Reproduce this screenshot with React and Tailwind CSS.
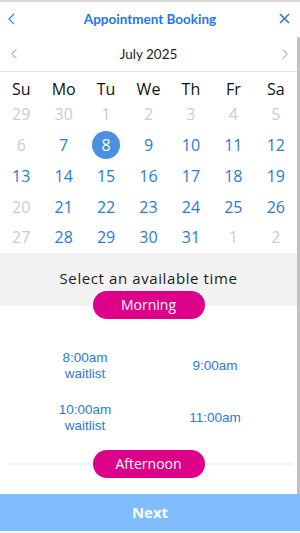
import React from 'react'

const weeks = [
  [[29, 0], [30, 0], [1, 0], [2, 0], [3, 0], [4, 0], [5, 0]],
  [[6, 0], [7, 1], [8, 2], [9, 1], [10, 1], [11, 1], [12, 1]],
  [[13, 1], [14, 1], [15, 1], [16, 1], [17, 1], [18, 1], [19, 1]],
  [[20, 0], [21, 1], [22, 1], [23, 1], [24, 1], [25, 1], [26, 1]],
  [[27, 0], [28, 1], [29, 1], [30, 1], [31, 1], [1, 0], [2, 0]],
]

const days = ['Su', 'Mo', 'Tu', 'We', 'Th', 'Fr', 'Sa']

function Chevron({ left, className }) {
  return (
    <svg className={className} viewBox="0 0 8 14" fill="none" stroke="currentColor" strokeWidth="1.3">
      {left ? <path d="M7 1L1 7l6 6" /> : <path d="M1 1l6 6-6 6" />}
    </svg>
  )
}

function Slot({ time, waitlist }) {
  return (
    <div className="flex h-[52px] flex-col items-center justify-center text-[13.5px] leading-[16px] text-[#2a7ad8]" style={{ fontFamily: '"Liberation Sans", Arial, sans-serif' }}>
      <span>{time}</span>
      {waitlist && <span>waitlist</span>}
    </div>
  )
}

export default function App() {
  return (
    <div className="flex h-[533px] w-[300px] flex-col overflow-hidden border-t-2 border-[#d6d6d6] bg-white" style={{ fontFamily: '"Open Sans", sans-serif' }}>
      {/* header */}
      <div className="relative flex h-[35px] shrink-0 items-center justify-center">
        <Chevron left className="absolute left-[8px] top-[11px] h-[12px] w-[7px] text-[#2277ee]" />
        <span className="text-[13.5px] font-bold text-[#1f75ee]" style={{ fontFamily: 'Lato, sans-serif' }}>Appointment Booking</span>
        <svg className="absolute left-[279px] top-[11px] h-[11px] w-[11px] text-[#2277ee]" viewBox="0 0 11 11" stroke="currentColor" strokeWidth="1.5">
          <path d="M1 1l9 9M10 1l-9 9" />
        </svg>
      </div>

      <div className="flex min-h-0 flex-1">
        <div className="w-[297px] shrink-0">
          {/* month */}
          <div className="relative flex h-[35px] items-center justify-center border-b border-[#e4e4e4]">
            <Chevron left className="absolute left-[11px] top-[11px] h-[12px] w-[6px] text-[#8e9494]" />
            <span className="text-[13.5px] text-[#222]" style={{ fontFamily: 'Lato, sans-serif' }}>July 2025</span>
            <Chevron className="absolute left-[282px] top-[11px] h-[12px] w-[6px] text-[#8e9494]" />
          </div>

          {/* calendar */}
          <div className="grid grid-cols-7">
            {days.map((d) => (
              <div key={d} className="flex h-[27px] items-end justify-center text-[16px] leading-[20px] text-[#111]">{d}</div>
            ))}
          </div>
          {weeks.map((w, i) => (
            <div key={i} className="grid h-[30.75px] grid-cols-7">
              {w.map(([n, s], j) => (
                <div key={j} className="flex items-center justify-center">
                  {s === 2 ? (
                    <span className="flex h-[28px] w-[28px] items-center justify-center rounded-full bg-[#4a8fe0] text-[16px] text-white">{n}</span>
                  ) : (
                    <span className={`text-[16px] ${s ? 'text-[#2a7ad5]' : 'text-[#c9cdcd]'}`}>{n}</span>
                  )}
                </div>
              ))}
            </div>
          ))}

          {/* time picker */}
          <div className="flex h-[53px] items-center justify-center bg-[#f2f2f2] pb-[3px]">
            <span className="text-[15px] tracking-[0.6px] text-[#222]">Select an available time</span>
          </div>
          <div className="relative -mt-[15px] flex justify-center">
            <span className="flex h-[28px] w-[112px] items-center justify-center rounded-full bg-[#dd0088] text-[14px] text-white">Morning</span>
          </div>

          <div className="mx-[20px] mt-[21px] grid w-[260px] grid-cols-2">
            <Slot time="8:00am" waitlist />
            <Slot time="9:00am" />
            <Slot time="10:00am" waitlist />
            <Slot time="11:00am" />
          </div>

          <div className="relative mt-[6px] flex h-[28px] items-center justify-center">
            <div className="absolute left-[8px] right-[5px] top-[13px] h-[2px] bg-[#eef2f5]" />
            <span className="relative flex h-[28px] w-[112px] items-center justify-center rounded-full bg-[#dd0088] text-[14px] text-white">Afternoon</span>
          </div>
        </div>
        <div className="w-[3px] bg-[#c1c1c1]" />
      </div>

      <div className="flex h-[39px] shrink-0 items-center justify-center border-b-2 border-white bg-[#80bdff]">
        <span className="text-[15px] font-bold text-white">Next</span>
      </div>
    </div>
  )
}
